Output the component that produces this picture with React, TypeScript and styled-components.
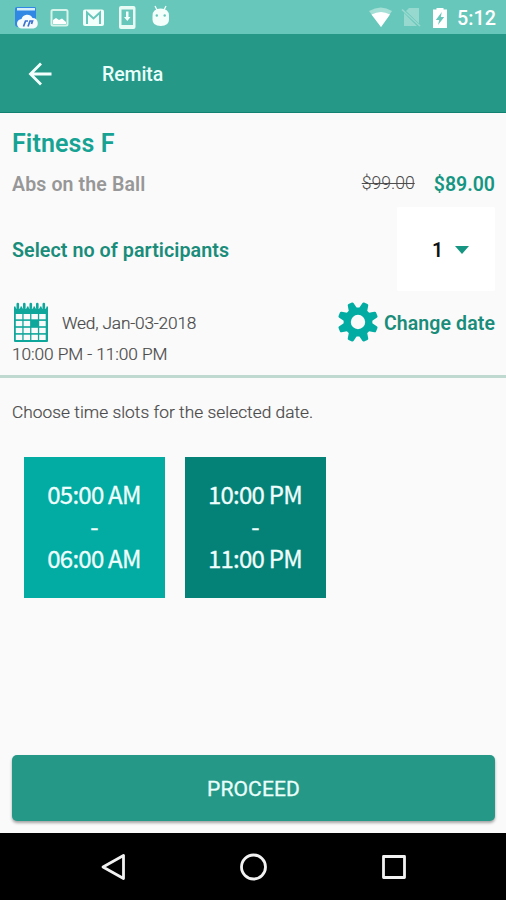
import React from "react";
import styled, { createGlobalStyle } from "styled-components";

const Global = createGlobalStyle`
  * { box-sizing: border-box; }
  body { margin: 0; background: #fafafa; font-family: Roboto, sans-serif; }
  svg { display: block; flex: none; }
`;

const Screen = styled.div`
  width: 506px;
  height: 900px;
  display: flex;
  flex-direction: column;
  background: #fafafa;
  overflow: hidden;
`;

const StatusBar = styled.div`
  height: 34px;
  display: flex;
  justify-content: space-between;
  background: #68c7bb;
  color: #fff;
`;

const StatusClock = styled.span`
  margin-top: 2px;
  width: 49px;
  line-height: 34px;
  font-size: 19.8px;
  font-weight: 500;
`;

const StatusEnd = styled.div`
  display: flex;
`;

const AppBar = styled.header`
  height: 79px;
  display: flex;
  align-items: center;
  padding: 1px 0 0 27px;
  background: #269888;
  border-bottom: 1px solid #118271;
`;

const BarTitle = styled.h1`
  margin: 2px 0 0 49px;
  color: #e9fffb;
  font-size: 19.5px;
  font-weight: 500;
  letter-spacing: -0.1px;
`;

const Main = styled.main`
  flex: 1;
  display: flex;
  flex-direction: column;
`;

const Row = styled.div<{ $h: number; $lift?: number }>`
  height: ${(p) => p.$h}px;
  padding: 0 11px ${(p) => p.$lift ?? 0}px 12px;
  display: flex;
  align-items: center;
  justify-content: space-between;
`;

const Label = styled.span<{ $size: number; $weight?: number; $color: string; $track?: number; $drop?: number }>`
  white-space: nowrap;
  padding-top: ${(p) => p.$drop ?? 0}px;
  font-size: ${(p) => p.$size}px;
  font-weight: ${(p) => p.$weight ?? 600};
  color: ${(p) => p.$color};
  letter-spacing: ${(p) => p.$track ?? 0}px;
`;

const BodyText = styled(Label)`
  font-weight: 300;
  -webkit-text-stroke: 0.2px ${(p) => p.$color};
`;

const Prices = styled.div`
  display: flex;
  align-items: center;
  gap: 19px;
`;

const OldPrice = styled.s`
  font-size: 17.6px;
  font-weight: 300;
  color: #4c4c4c;
  text-decoration-thickness: 1px;
  margin-top: -2px;
`;

const Picker = styled.button`
  width: 98px;
  height: 84px;
  display: flex;
  align-items: center;
  gap: 12px;
  padding: 2px 0 0 35px;
  border: 0;
  border-radius: 2px;
  background: #fff;
  font: 600 19.5px Roboto, sans-serif;
  color: #111;
`;

const DateGroup = styled.div`
  display: flex;
  align-items: center;
  gap: 12px;
`;

const ChangeLink = styled.div`
  display: flex;
  align-items: center;
  gap: 6px;
`;

const Divider = styled.hr`
  width: 100%;
  height: 3px;
  margin: 0;
  border: 0;
  background: #bfd8d0;
`;

const Slots = styled.div`
  display: flex;
  gap: 20px;
  padding: 10px 24px 0;
`;

const Slot = styled.button<{ $selected?: boolean }>`
  width: 141px;
  height: 141px;
  display: flex;
  flex-direction: column;
  align-items: center;
  justify-content: center;
  border: 0;
  padding: 0 1px 3px 0;
  background: ${(p) => (p.$selected ? "#058277" : "#02aca2")};
  color: #f0fffd;
  font: 400 24px/32px "Noto Sans CJK SC", "Noto Sans", sans-serif;
  letter-spacing: -0.75px;
  -webkit-text-stroke: 0.3px #f0fffd;
`;

const Footer = styled.div`
  margin-top: auto;
  padding: 0 11px 12px 12px;
`;

const Proceed = styled.button`
  width: 100%;
  height: 66px;
  border: 0;
  border-radius: 5px;
  background: #269888;
  box-shadow: 0 2px 3px rgba(0, 0, 0, 0.35);
  color: #e9fffb;
  font: 400 21px Roboto, sans-serif;
  letter-spacing: 0.15px;
  -webkit-text-stroke: 0.3px #e9fffb;
  padding: 2px 0 0;
`;

const NavBar = styled.nav`
  height: 67px;
  background: #000;
  display: flex;
  justify-content: center;
  align-items: center;
  gap: 112px;
  padding-left: 1px;
`;

const StatusIcons = () => (
  <svg width="180" height="34" viewBox="0 0 180 34">
    <path d="M15 9q0-2 2-2h18q1 0 1 2v18H18q-3 0-3-3z" fill="#3187e4" />
    <path d="M17 8h18v2.500H17z" fill="#d7effb" />
    <path d="M22 28.500a4.700 4.700 0 0 1-.5-9.500 6 6 0 0 1 11-1 5.300 5.300 0 0 1 1 10.500z" fill="#f5faff" />
    <path d="M23.500 26.500l2-5.500h2.500M28 26.500l2-5.500h2.500l-1 3" fill="none" stroke="#3b72d0" strokeWidth="1.700" />
    <rect x="51.500" y="10" width="16" height="15.500" rx="1.500" fill="none" stroke="#d6f4ec" strokeWidth="2" />
    <path d="M53 24v-4l3-2 3 2 3-1.500 4 3.500v2z" fill="#fff" />
    <rect x="83" y="9.500" width="21" height="16.500" rx="2" fill="#f3fffa" />
    <path d="M87 24V12.500l6.500 6 6.500-6V24" fill="none" stroke="#68c7bb" strokeWidth="2" />
    <path d="M121 6h12.500q2 0 2 2v19q0 2-2 2H121q-2 0-2-2V8q0-2 2-2zm.5 3.500v15.500H133V9.500z" fill="#e9fbf5" fillRule="evenodd" />
    <path d="M126 11.500h2.500v5.500h2l-3.200 4-3.300-4h2z" fill="#f3fffa" />
    <path d="M155 6l2 4M166 6l-2 4" stroke="#f3fffa" strokeWidth="1.300" />
    <path d="M152.500 16q0-7.500 8.250-7.500T169 16v3.500q0 6.500-8.250 6.500t-8.250-6.500z" fill="#f3fffa" />
    <circle cx="156.800" cy="15.500" r="1.200" fill="#68c7bb" />
    <circle cx="164.700" cy="15.500" r="1.200" fill="#68c7bb" />
  </svg>
);

const SignalIcons = () => (
  <svg width="88" height="34" viewBox="369 0 88 34">
    <path d="M369 11q12-7 23 0L381 27z" fill="#a5dfd5" />
    <path d="M371.500 14.500q9.500-5 18.500 0L381 27z" fill="#fff" />
    <path d="M406 11l3-3h10v15.500zM404 13l13 13h-13z" fill="#98d9cf" />
    <path d="M402 9.500l18 16.500" stroke="#98d9cf" strokeWidth="1.600" />
    <path d="M433 9.500h3.500V8h7v1.500h3.500V28h-14z" fill="#fff" />
    <path d="M441.800 12l-6 8h3.400l-1.200 5 6.200-8h-3.400z" fill="#68c7bb" />
  </svg>
);

const BackArrow = () => (
  <svg width="26" height="26" viewBox="0 0 26 26" fill="none" stroke="#f3fffc" strokeWidth="2.800">
    <path d="M24.500 13H4M14 2.500L3.500 13 14 23.500" />
  </svg>
);

const CalendarIcon = () => (
  <svg width="38" height="42" viewBox="0 0 38 42">
    <path d="M2 5.500h34v34.500q0 1-1 1H3q-1 0-1-1z" fill="#0fa79b" />
    {[0, 1, 2, 3].map((r) =>
      [0, 1, 2, 3].map((c) => (
        <rect
          key={`${r}-${c}`}
          x={3.8 + c * 7.8}
          y={13 + r * 6.9}
          width="6.500"
          height="5.300"
          fill={r === 1 && c === 2 ? "#0fa79b" : "#fafafa"}
        />
      )),
    )}
    {[0, 1, 2, 3, 4].map((i) => (
      <g key={i}>
        <circle cx={6 + i * 6.5} cy="5.500" r="2.500" fill="#fafafa" />
        <path d={`M${5.8 + i * 6.5} 3v4`} stroke="#0fa79b" strokeWidth="2.600" strokeLinecap="round" />
      </g>
    ))}
  </svg>
);

const GearIcon = () => (
  <svg width="40" height="40" viewBox="-20 -20 40 40">
    <g fill="#02aca2">
      {[22.5, 67.5, 112.5, 157.5, 202.5, 247.5, 292.5, 337.5].map((a) => (
        <path key={a} d="M-4.800-11L-3.200-19Q-3-20.300-1.800-20.300H1.800Q3-20.300 3.200-19L4.800-11z" transform={`rotate(${a})`} />
      ))}
    </g>
    <circle r="10.800" fill="none" stroke="#02aca2" strokeWidth="7.200" />
  </svg>
);

const teal = "#198c7a";
const ink = "#4a4a4a";

export default function App() {
  return (
    <Screen>
      <Global />
      <StatusBar>
        <StatusIcons />
        <StatusEnd>
          <SignalIcons />
          <StatusClock>5:12</StatusClock>
        </StatusEnd>
      </StatusBar>
      <AppBar>
        <BackArrow />
        <BarTitle>Remita</BarTitle>
      </AppBar>
      <Main>
        <Row $h={60}>
          <Label $size={25} $color="#16a394" $track={0.1}>Fitness F</Label>
        </Row>
        <Row $h={22}>
          <Label $size={19.5} $color="#979797" $track={0.14}>Abs on the Ball</Label>
          <Prices>
            <OldPrice>$99.00</OldPrice>
            <Label $size={19.5} $color="#169682">$89.00</Label>
          </Prices>
        </Row>
        <Row $h={108}>
          <Label $size={19.7} $color={teal} $track={0.05} $drop={2}>Select no of participants</Label>
          <Picker>
            1
            <svg width="14" height="8" viewBox="0 0 14 8">
              <path d="M0 0h14L7 8z" fill="#169682" />
            </svg>
          </Picker>
        </Row>
        <Row $h={38}>
          <DateGroup>
            <CalendarIcon />
            <BodyText $size={17.3} $color={ink} $track={-0.17} $drop={2}>Wed, Jan-03-2018</BodyText>
          </DateGroup>
          <ChangeLink>
            <GearIcon />
            <Label $size={19.5} $color={teal} $track={0.1} $drop={2}>Change date</Label>
          </ChangeLink>
        </Row>
        <Row $h={34} $lift={9}>
          <BodyText $size={17.3} $color={ink} $track={-0.08}>10:00 PM - 11:00 PM</BodyText>
        </Row>
        <Divider />
        <Row $h={69} $lift={2}>
          <BodyText $size={17.3} $color={ink} $track={0.04}>Choose time slots for the selected date.</BodyText>
        </Row>
        <Slots>
          <Slot>
            <span>05:00 AM</span>
            <span>-</span>
            <span>06:00 AM</span>
          </Slot>
          <Slot $selected>
            <span>10:00 PM</span>
            <span>-</span>
            <span>11:00 PM</span>
          </Slot>
        </Slots>
        <Footer>
          <Proceed>PROCEED</Proceed>
        </Footer>
      </Main>
      <NavBar>
        <svg width="28" height="30" viewBox="0 0 28 30" fill="none" stroke="#f2f2f2" strokeWidth="2.800" strokeLinejoin="round">
          <path d="M23.500 3.500v23L3 15z" />
        </svg>
        <svg width="28" height="30" viewBox="0 0 28 30" fill="none" stroke="#f2f2f2" strokeWidth="2.800">
          <circle cx="13.500" cy="15" r="12" />
        </svg>
        <svg width="28" height="30" viewBox="0 0 28 30" fill="none" stroke="#f2f2f2" strokeWidth="2.800" strokeLinejoin="round">
          <rect x="3.500" y="4.500" width="21" height="21" />
        </svg>
      </NavBar>
    </Screen>
  );
}
